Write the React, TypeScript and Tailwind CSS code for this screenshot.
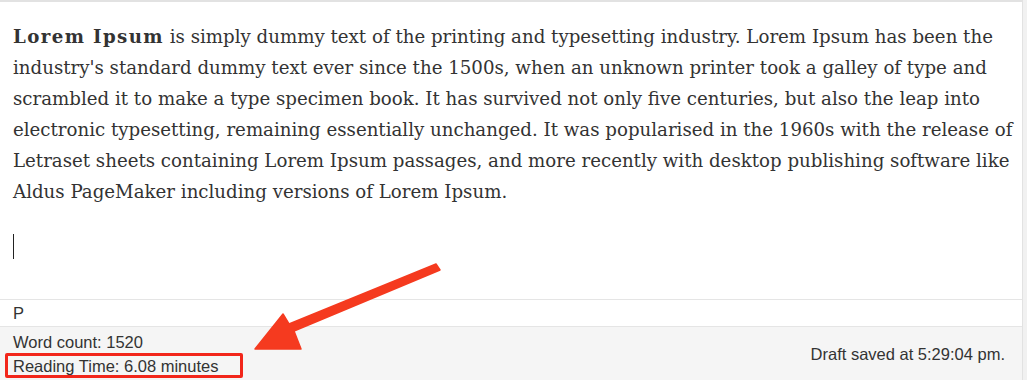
export default function App() {
  const lines = [
    "industry's standard dummy text ever since the 1500s, when an unknown printer took a galley of type and",
    "scrambled it to make a type specimen book. It has survived not only five centuries, but also the leap into",
    "electronic typesetting, remaining essentially unchanged. It was popularised in the 1960s with the release of",
    "Letraset sheets containing Lorem Ipsum passages, and more recently with desktop publishing software like",
    "Aldus PageMaker including versions of Lorem Ipsum.",
  ];

  return (
    <div className="relative w-[1027px] h-[380px] overflow-hidden bg-[#f1f1f1]">
      <div className="w-[1023px] h-[380px] flex flex-col bg-white border-t-2 border-r border-[#e2e2e2]">
        {/* editor body */}
        <div
          className="h-[297px] pl-[13px] pt-[19px] text-[#333] text-[18.2px] leading-[31px] whitespace-nowrap"
          style={{ fontFamily: "'DejaVu Serif', Georgia, serif" }}
        >
          <p>
            <strong className="tracking-[1.4px]">Lorem Ipsum</strong> is simply dummy text of the printing and typesetting industry. Lorem Ipsum has been the
            {lines.map((l) => (
              <span key={l}>
                <br />
                {l}
              </span>
            ))}
          </p>
          <p className="mt-[24px] h-[31px] flex items-center">
            <span className="block w-px h-[25px] bg-[#222]" />
          </p>
        </div>

        {/* element path */}
        <div
          className="h-[28px] border-y border-[#e5e5e5] pl-[13px] flex items-center text-[16.5px] text-[#333]"
          style={{ fontFamily: "'Liberation Sans', Arial, sans-serif" }}
        >
          P
        </div>

        {/* status bar */}
        <div
          className="flex-1 bg-[#f5f5f5] flex items-center justify-between pl-[13px] pr-[17px] text-[16.5px] text-[#333]"
          style={{ fontFamily: "'Liberation Sans', Arial, sans-serif" }}
        >
          <div className="flex flex-col leading-[24px] pt-[1px]">
            <span>Word count: 1520</span>
            <span className="relative">
              Reading Time: 6.08 minutes
              <span className="absolute left-[-8px] top-[-1px] w-[238px] h-[25px] border-[3px] border-[#f2261a] rounded-[2px]" />
            </span>
          </div>
          <span className="pt-[1px]">Draft saved at 5:29:04 pm.</span>
        </div>
      </div>

      {/* annotation arrow */}
      <svg className="absolute left-0 top-0 pointer-events-none" width="1027" height="380" viewBox="0 0 1027 380">
        <polygon
          points="436,264 440,270 294,331 301,349 255,349 283,314 289,324"
          fill="#f53a1f"
          stroke="#f53a1f"
          strokeWidth="1.5"
          strokeLinejoin="round"
        />
      </svg>
    </div>
  );
}
